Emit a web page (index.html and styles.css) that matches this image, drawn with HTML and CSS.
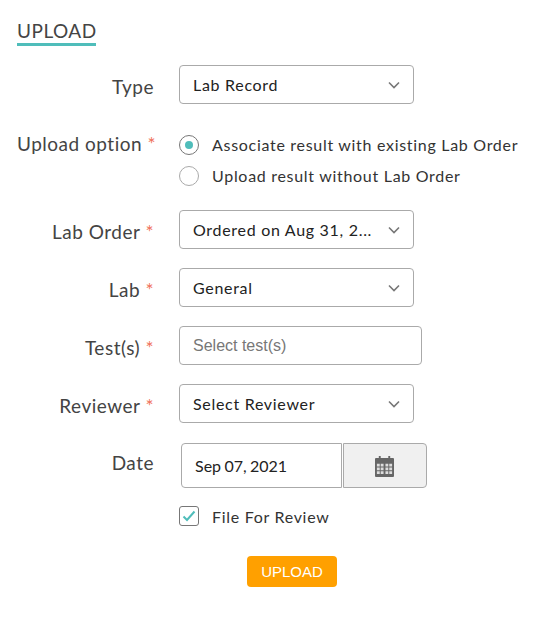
FILE: index.html
```html
<!doctype html>
<html>
  <head>
    <title>Upload</title>
    <link rel="stylesheet" href="styles.css">
  </head>
  <body>
    <div class="uploadForm">
      <h2 class="title"><span>UPLOAD</span></h2>

      <div class="row rowType">
        <label class="label">Type</label>
        <div class="select"><span>Lab Record</span><svg class="chevron" viewBox="0 0 12 8"><path d="M1 1.5l5 5 5-5"/></svg></div>
      </div>

      <div class="row rowOption">
        <label class="label">Upload option <i class="required">*</i></label>
        <div class="radios">
          <div class="radio"><span class="radioDot checked"></span>Associate result with existing Lab Order</div>
          <div class="radio"><span class="radioDot"></span>Upload result without Lab Order</div>
        </div>
      </div>

      <div class="row rowOrder">
        <label class="label">Lab Order <i class="required">*</i></label>
        <div class="select"><span>Ordered on Aug 31, 2...</span><svg class="chevron" viewBox="0 0 12 8"><path d="M1 1.5l5 5 5-5"/></svg></div>
      </div>

      <div class="row">
        <label class="label">Lab <i class="required">*</i></label>
        <div class="select"><span>General</span><svg class="chevron" viewBox="0 0 12 8"><path d="M1 1.5l5 5 5-5"/></svg></div>
      </div>

      <div class="row">
        <label class="label">Test(s) <i class="required">*</i></label>
        <input class="textInput" type="text" placeholder="Select test(s)">
      </div>

      <div class="row rowReviewer">
        <label class="label">Reviewer <i class="required">*</i></label>
        <div class="select"><span>Select Reviewer</span><svg class="chevron" viewBox="0 0 12 8"><path d="M1 1.5l5 5 5-5"/></svg></div>
      </div>

      <div class="row rowDate">
        <label class="label">Date</label>
        <div class="dateGroup">
          <div class="dateValue">Sep 07, 2021</div>
          <div class="dateButton">
            <svg class="calendar" viewBox="0 0 20 23">
              <path class="calBody" d="M1 3h3V1h2v2h8V1h2v2h3a1 1 0 0 1 1 1v18a1 1 0 0 1-1 1H1a1 1 0 0 1-1-1V4a1 1 0 0 1 1-1z"/>
              <path class="calGrid" d="M2 9h3v3H2zM6 9h3v3H6zM11 9h3v3h-3zM15 9h3v3h-3zM2 13h3v3H2zM6 13h3v3H6zM11 13h3v3h-3zM15 13h3v3h-3zM2 17h3v3H2zM6 17h3v3H6zM11 17h3v3h-3zM15 17h3v3h-3z"/>
            </svg>
          </div>
        </div>
      </div>

      <div class="row rowCheck">
        <div class="checkBox"><svg viewBox="0 0 14 12"><path d="M1.500 6.500l3.500 3.500 7.500-8.500"/></svg></div>
        File For Review
      </div>

      <div class="actions">
        <button class="uploadButton" type="button">UPLOAD</button>
      </div>
    </div>
  </body>
</html>
```

FILE: styles.css
```css
body {
  margin: 0;
  background: #fff;
  font-family: "Lato", "Liberation Sans", sans-serif;
  color: #444;
}

.uploadForm {
  width: 556px;
  height: 630px;
  padding: 17px 0 0 17px;
  box-sizing: border-box;
  overflow: hidden;
}

.title {
  margin: 0 0 19px;
  font-size: 19px;
  font-weight: 400;
  letter-spacing: 0.5px;
  line-height: 27px;
}

.title span {
  display: inline-block;
  border-bottom: 3px solid #4fbdba;
  height: 26px;
  width: 79px;
}

.row {
  display: flex;
  align-items: center;
  margin-bottom: 19px;
}

.label {
  width: 137px;
  margin-right: 25px;
  padding-top: 4px;
  font-size: 19px;
  letter-spacing: 0.5px;
  line-height: 24px;
  text-align: right;
  white-space: nowrap;
  color: #444;
}

.required {
  color: #f0705a;
  font-style: normal;
  font-size: 19px;
  line-height: 1;
  position: relative;
  top: 0;
}

.select {
  width: 235px;
  height: 39px;
  box-sizing: border-box;
  display: flex;
  align-items: center;
  justify-content: space-between;
  padding: 0 13px;
  border: 1px solid #aaa;
  border-radius: 4px;
  font-size: 16px;
  letter-spacing: 0.7px;
  color: #222;
}

.chevron {
  width: 12px;
  height: 8px;
  fill: none;
  stroke: #777;
  stroke-width: 1.6;
}

.rowType {
  margin-bottom: 31px;
}

.rowOption {
  align-items: flex-start;
  margin-bottom: 23px;
}

.rowOption .label {
  padding-top: 0;
  margin-top: -3px;
}

.radios {
  display: flex;
  flex-direction: column;
  gap: 10px;
}

.radio {
  display: flex;
  align-items: flex-start;
  height: 21px;
  line-height: 19px;
  font-size: 16px;
  letter-spacing: 0.7px;
  color: #333;
}

.radioDot {
  width: 20px;
  height: 20px;
  box-sizing: border-box;
  border: 1px solid #aaa;
  border-radius: 50%;
  margin-right: 13px;
  display: flex;
  align-items: center;
  justify-content: center;
}

.radioDot.checked {
  border-color: #777;
}

.radioDot.checked::after {
  content: "";
  width: 8px;
  height: 8px;
  border-radius: 50%;
  background: #4fbdba;
}

.textInput {
  width: 243px;
  height: 39px;
  box-sizing: border-box;
  padding: 0 13px;
  border: 1px solid #aaa;
  border-radius: 4px;
  font-family: "Liberation Sans", sans-serif;
  font-size: 16px;
  outline: none;
}

.textInput::placeholder {
  color: #777;
  opacity: 1;
}

.rowReviewer {
  margin-bottom: 20px;
}

.rowDate {
  align-items: flex-start;
  margin-bottom: 18px;
}

.rowDate .label {
  padding-top: 0;
  margin-top: 8px;
  margin-right: 27px;
}

.dateGroup {
  display: flex;
}

.dateValue {
  width: 161px;
  height: 45px;
  box-sizing: border-box;
  padding-left: 13px;
  border: 1px solid #aaa;
  border-radius: 4px 0 0 4px;
  font-size: 16px;
  word-spacing: -0.7px;
  line-height: 43px;
  color: #222;
}

.dateButton {
  width: 84px;
  height: 45px;
  box-sizing: border-box;
  margin-left: 1px;
  padding-right: 2px;
  border: 1px solid #aaa;
  border-radius: 0 4px 4px 0;
  background: #f0f0f0;
  display: flex;
  align-items: center;
  justify-content: center;
}

.calendar {
  width: 19px;
  height: 22px;
}

.calBody {
  fill: #666;
}

.calGrid {
  fill: #ddd;
}

.rowCheck {
  padding-left: 162px;
  height: 20px;
  margin-bottom: 30px;
  font-size: 16px;
  letter-spacing: 0.7px;
  color: #333;
}

.checkBox {
  width: 20px;
  height: 20px;
  box-sizing: border-box;
  margin-right: 13px;
  border: 1px solid #777;
  border-radius: 3px;
  display: flex;
  align-items: center;
  justify-content: center;
}

.checkBox svg {
  width: 14px;
  height: 12px;
  fill: none;
  stroke: #4fbdba;
  stroke-width: 2;
}

.actions {
  padding-left: 230px;
}

.uploadButton {
  display: block;
  width: 90px;
  height: 31px;
  padding: 0;
  border: 0;
  border-radius: 4px;
  background: #ffa000;
  color: #fff;
  font-family: "Liberation Sans", sans-serif;
  font-size: 15px;
}
```
